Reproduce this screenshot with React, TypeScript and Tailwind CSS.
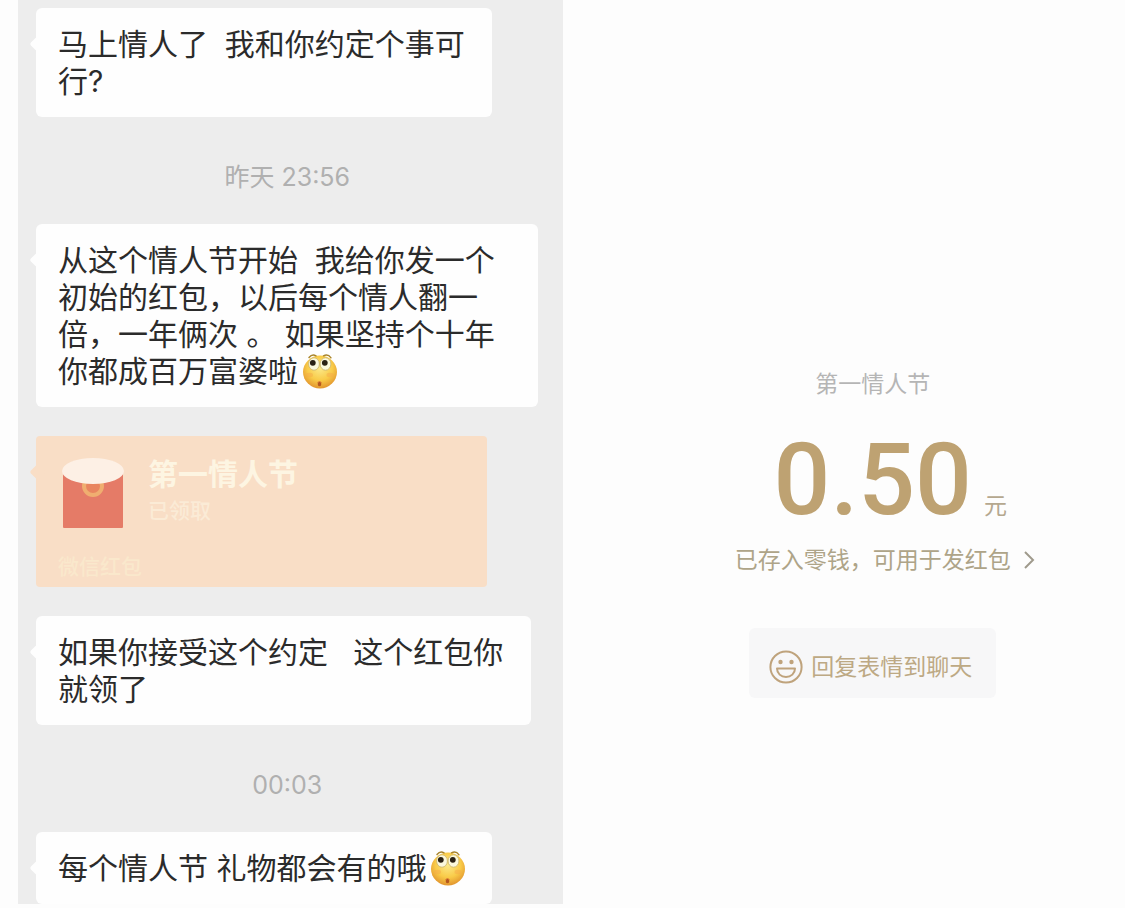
import type { ReactNode } from "react";

const fontStack = "font-['Inter','Noto_Sans_CJK_SC',sans-serif]";

function ShyEmoji() {
  return (
    <svg
      viewBox="0 0 36 36"
      className="inline-block size-9 align-[-7px] ml-1"
      role="img"
      aria-label="害羞"
    >
      <defs>
        <radialGradient id="face" cx="50%" cy="38%" r="62%">
          <stop offset="0%" stopColor="#fbe98a" />
          <stop offset="60%" stopColor="#f9cb48" />
          <stop offset="100%" stopColor="#e2952e" />
        </radialGradient>
      </defs>
      <ellipse cx="18" cy="19" rx="17" ry="16.4" fill="url(#face)" />
      <ellipse cx="12" cy="11" rx="5.4" ry="6.2" fill="#fbf8dc" stroke="#c9b36a" strokeWidth="0.8" />
      <ellipse cx="23.5" cy="11" rx="5.4" ry="6.2" fill="#fbf8dc" stroke="#c9b36a" strokeWidth="0.8" />
      <path d="M7 4.5C9 2 12 1.6 14 2.8M21.5 2.8C24 1.6 27 2 29 4.8" fill="none" stroke="#a8842c" strokeWidth="1.4" strokeLinecap="round" />
      <circle cx="10.8" cy="9.8" r="2.9" fill="#2a2114" />
      <circle cx="22.8" cy="9.8" r="2.9" fill="#2a2114" />
      <ellipse cx="7.5" cy="22" rx="3.5" ry="2.2" fill="#f6a94a" opacity="0.5" />
      <ellipse cx="28" cy="22" rx="3.5" ry="2.2" fill="#f6a94a" opacity="0.5" />
      <ellipse cx="17.5" cy="31" rx="1.8" ry="2.2" fill="#b4561e" />
      <path d="M15.4 29.6Q17.5 27.4 19.6 29.6" fill="none" stroke="#dc7a35" strokeWidth="1" />
    </svg>
  );
}

function Bubble({ width, children }: { width: string; children: ReactNode }) {
  return (
    <div
      className={`relative max-w-full whitespace-pre rounded-md bg-[#fefefe] px-[22px] pt-[18px] pb-[17px] text-[30px] leading-[37px] text-[#2b2b2b] ${width}`}
    >
      <span className="absolute -left-1 top-[30px] size-3 rotate-45 rounded-xs bg-[#fefefe]" />
      {children}
    </div>
  );
}

function Timestamp({ children }: { children: ReactNode }) {
  return (
    <time className="mt-11 mb-[31px] block w-full pr-6 text-center text-[25px] leading-8 text-[#b0b0b0]">
      {children}
    </time>
  );
}

function Envelope() {
  return (
    <svg viewBox="0 0 62 72" className="h-[72px] w-[62px] shrink-0">
      <rect x="1" y="14" width="60" height="57" rx="1" fill="#e57b67" />
      <circle cx="31" cy="29" r="9" fill="#e9855f" stroke="#f0ae70" strokeWidth="4" />
      <ellipse cx="31" cy="14" rx="31" ry="13" fill="#fdf0e5" />
    </svg>
  );
}

function RedPacket() {
  return (
    <a href="#packet" className="relative my-[29px] block w-[451px] max-w-full rounded-sm bg-[#f9dec6] pt-[21px] pb-1">
      <span className="absolute -left-1 top-[30px] size-3 rotate-45 rounded-xs bg-[#f9dec6]" />
      <div className="flex gap-6 pl-[26px]">
        <Envelope />
        <div>
          <div className="text-[30px] leading-[34px] font-bold text-[#fdf5e2]">第一情人节</div>
          <div className="mt-1 text-[21px] leading-8 font-medium text-[#fbebd6]">已领取</div>
        </div>
      </div>
      <div className="mt-[22px] pl-[22px] text-[21px] leading-8 font-medium text-[#fae8cc]">微信红包</div>
    </a>
  );
}

function SmileIcon() {
  return (
    <svg viewBox="0 0 34 34" className="size-[34px]" fill="none" stroke="#bfa37c" strokeWidth="2">
      <circle cx="17" cy="17" r="15.6" />
      <circle cx="11.5" cy="12" r="2.2" fill="#bfa37c" stroke="none" />
      <circle cx="22.5" cy="12" r="2.2" fill="#bfa37c" stroke="none" />
      <path d="M8 18.5h18c0 5-4 8.5-9 8.5s-9-3.5-9-8.5z" strokeLinejoin="round" />
    </svg>
  );
}

function ChatPanel() {
  return (
    <section className="ml-[18px] self-start bg-[#ededed] pt-2 pl-[18px]">
      <Bubble width="w-[456px]">{"马上情人了  我和你约定个事可\n行?"}</Bubble>
      <Timestamp>昨天 23:56</Timestamp>
      <Bubble width="w-[502px]">
        {"从这个情人节开始  我给你发一个\n初始的红包，以后每个情人翻一\n倍，一年俩次 。 如果坚持个十年\n你都成百万富婆啦"}
        <ShyEmoji />
      </Bubble>
      <RedPacket />
      <Bubble width="w-[495px]">{"如果你接受这个约定   这个红包你\n就领了"}</Bubble>
      <Timestamp>00:03</Timestamp>
      <Bubble width="w-[456px]">
        {"每个情人节 礼物都会有的哦"}
        <ShyEmoji />
      </Bubble>
    </section>
  );
}

function AmountPanel() {
  return (
    <section className="flex flex-col items-center pt-[368px] pl-[58px] text-[23px] leading-8">
      <h1 className="text-[#b5b5b5]">第一情人节</h1>
      <div className="mt-6 grid w-full grid-cols-[1fr_auto_1fr] items-end">
        <span />
        <span className="font-['Roboto',sans-serif] text-[100px] leading-[112px] font-medium text-[#bea272]">
          0.50
        </span>
        <span className="pb-[14px] pl-3 text-[#b5a88f]">元</span>
      </div>
      <a href="#balance" className="mt-2 grid w-full grid-cols-[1fr_auto_1fr] items-center text-[#aea488]">
        <span />
        <span>已存入零钱，可用于发红包</span>
        <svg viewBox="0 0 12 20" className="ml-3 h-5 w-3" fill="none" stroke="#9f9a8c" strokeWidth="2">
          <path d="M2 2l8 8-8 8" />
        </svg>
      </a>
      <button
        type="button"
        className="mt-[52px] flex items-center gap-2 rounded-md bg-[#f7f7f8] pt-[22px] pr-6 pb-[14px] pl-5 text-[#bda984]"
      >
        <SmileIcon />
        回复表情到聊天
      </button>
    </section>
  );
}

export default function App() {
  return (
    <main className={`grid min-h-screen grid-cols-2 bg-[#fdfdfd] ${fontStack}`}>
      <ChatPanel />
      <AmountPanel />
    </main>
  );
}
